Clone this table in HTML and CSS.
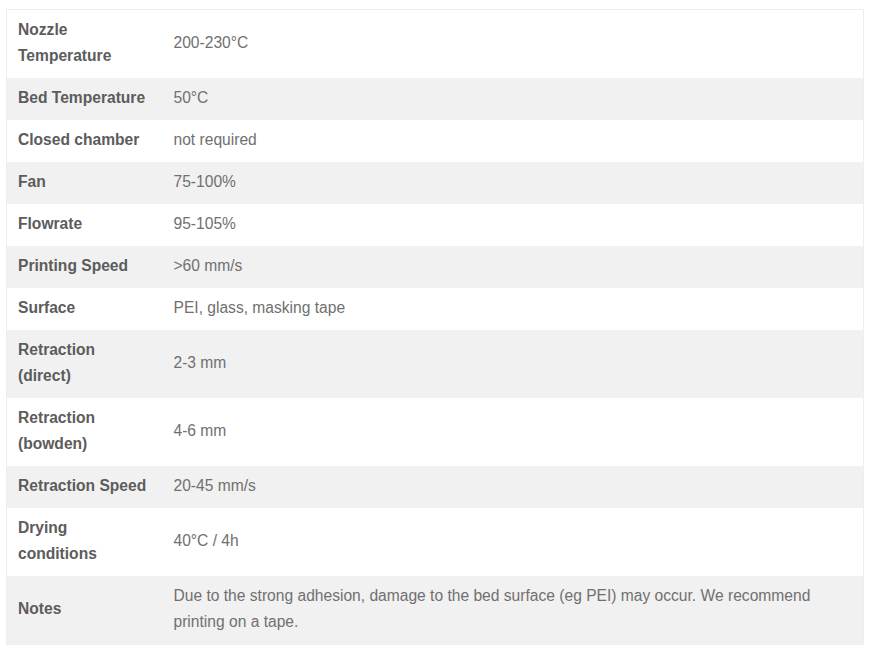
FILE: index.html
```html
<!DOCTYPE html>
<html lang="en">
<head>
    <meta charset="UTF-8">
    <meta name="viewport" content="width=device-width, initial-scale=1">
    <title>Print settings</title>
    <link rel="stylesheet" href="styles.css">
</head>
<body>
<div class="wrap">
    <table class="specs">
        <tbody>
        <tr><th>Nozzle<br>Temperature</th><td>200-230°C</td></tr>
        <tr><th>Bed Temperature</th><td>50°C</td></tr>
        <tr><th>Closed chamber</th><td>not required</td></tr>
        <tr><th>Fan</th><td>75-100%</td></tr>
        <tr><th>Flowrate</th><td>95-105%</td></tr>
        <tr><th>Printing Speed</th><td>&gt;60 mm/s</td></tr>
        <tr><th>Surface</th><td>PEI, glass, masking tape</td></tr>
        <tr><th>Retraction<br>(direct)</th><td>2-3 mm</td></tr>
        <tr><th>Retraction<br>(bowden)</th><td>4-6 mm</td></tr>
        <tr><th>Retraction Speed</th><td>20-45 mm/s</td></tr>
        <tr><th>Drying<br>conditions</th><td>40°C / 4h</td></tr>
        <tr><th>Notes</th><td>Due to the strong adhesion, damage to the bed surface (eg PEI) may occur. We recommend printing on a tape.</td></tr>
        </tbody>
    </table>
</div>
</body>
</html>
```

FILE: styles.css
```css
* {
    box-sizing: border-box;
    margin: 0;
    padding: 0;
}

body {
    background-color: #fff;
    font-family: 'Liberation Sans', Arial, sans-serif;
    font-size: 15.6px;
    color: #707070;
}

.wrap {
    padding: 9px 10px 0 6px;
}

.specs {
    width: 100%;
    border-collapse: collapse;
    border: 1px solid #eeeeee;
}

.specs th,
.specs td {
    padding: 7px 12px 9px 11px;
    line-height: 26px;
    text-align: left;
    vertical-align: middle;
}

.specs th {
    width: 156px;
    font-weight: 700;
    color: #5c5c5c;
    white-space: nowrap;
}

.specs tr:nth-child(even) {
    background-color: #f1f1f1;
}
```
